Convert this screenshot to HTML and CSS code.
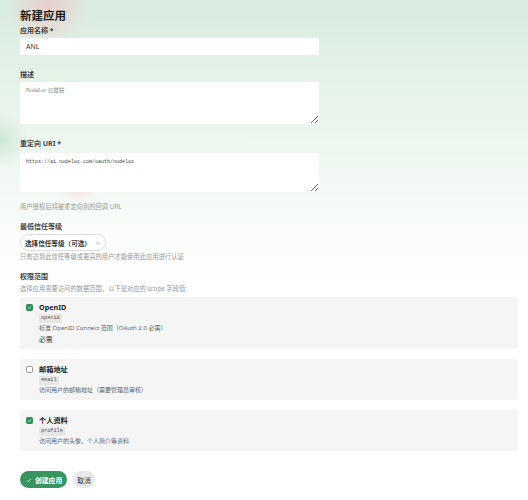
FILE: index.html
```html
<!DOCTYPE html>
<html lang="zh-CN">
<head>
    <meta charset="UTF-8">
    <meta name="viewport" content="width=device-width, initial-scale=1.0">
    <title>新建应用</title>
    <link rel="stylesheet" href="styles.css">
</head>
<body>
    <div class="page">
        <h1 class="page-title">新建应用</h1>

        <div class="field">
            <label class="label" for="appName">应用名称 *</label>
            <input class="input" id="appName" type="text" value="ANL">
        </div>

        <div class="field">
            <label class="label" for="appDesc">描述</label>
            <textarea class="textarea textarea-desc" id="appDesc">NodeLoc 公益站</textarea>
        </div>

        <div class="field field-hint">
            <label class="label label-uri" for="redirectUri">重定向 URI *</label>
            <textarea class="textarea textarea-uri" id="redirectUri">https://ai.nodeloc.com/oauth/nodeloc</textarea>
            <p class="hint hint-uri">用户授权后将被重定向到的回调 URL</p>
        </div>

        <div class="field field-hint">
            <label class="label">最低信任等级</label>
            <button class="select" type="button">
                选择信任等级（可选）
                <svg width="6" height="6" viewBox="0 0 10 10"><path d="M2 4l3 3 3-3" fill="none" stroke="#999" stroke-width="1.2"/></svg>
            </button>
            <p class="hint">只有达到此信任等级或更高的用户才能使用此应用进行认证</p>
        </div>

        <div class="field">
            <div class="label">权限范围</div>
            <p class="hint hint-scope">选择应用需要访问的数据范围，以下是对应的 scope 字段值:</p>

            <div class="scope-list">
                <div class="scope-card">
                    <span class="check checked"><svg viewBox="0 0 10 10"><path d="M2.2 5.2l1.9 1.9 3.8-4" fill="none" stroke="#fff" stroke-width="1.6"/></svg></span>
                    <div class="scope-body">
                        <div class="scope-name">OpenID</div>
                        <code class="scope-code">openid</code>
                        <div class="scope-desc">标准 OpenID Connect 范围（OAuth 2.0 必需）</div>
                        <div class="scope-required">必需</div>
                    </div>
                </div>

                <div class="scope-card">
                    <span class="check"></span>
                    <div class="scope-body">
                        <div class="scope-name">邮箱地址</div>
                        <code class="scope-code">email</code>
                        <div class="scope-desc">访问用户的邮箱地址（需要管理员审核）</div>
                    </div>
                </div>

                <div class="scope-card">
                    <span class="check checked"><svg viewBox="0 0 10 10"><path d="M2.2 5.2l1.9 1.9 3.8-4" fill="none" stroke="#fff" stroke-width="1.6"/></svg></span>
                    <div class="scope-body">
                        <div class="scope-name">个人资料</div>
                        <code class="scope-code">profile</code>
                        <div class="scope-desc">访问用户的头像、个人简介等资料</div>
                    </div>
                </div>
            </div>
        </div>

        <div class="actions">
            <button class="btn btn-primary" type="button">
                <svg width="6" height="6" viewBox="0 0 10 10"><path d="M1.5 5.5l2.5 2.5 4.5-5" fill="none" stroke="#fff" stroke-width="1.2"/></svg>
                创建应用
            </button>
            <button class="btn btn-cancel" type="button">取消</button>
        </div>
    </div>
</body>
</html>
```

FILE: styles.css
```css
body {
    margin: 0;
    min-height: 500px;
    font-family: "Noto Sans", "Noto Sans CJK SC", sans-serif;
    color: #222;
    background:
        radial-gradient(circle at 48px 6px, rgba(238, 196, 196, 0.75), rgba(238, 196, 196, 0) 42px),
        radial-gradient(circle at 78px 178px, rgba(236, 190, 190, 0.6), rgba(236, 190, 190, 0) 26px),
        radial-gradient(circle at 0 140px, rgba(190, 225, 200, 0.7), rgba(190, 225, 200, 0) 28px),
        linear-gradient(180deg, #d8ece0 0, #e6f3ea 90px, #eef6f0 150px, #f9fcfa 230px, #fff 290px);
}

.page {
    padding: 7px 10px 0 20px;
}

.page-title {
    margin: 0;
    font-size: 11.5px;
    line-height: 18px;
    font-weight: 700;
    color: #1c1c1c;
}

.field {
    margin-bottom: 14px;
}

.field-hint {
    margin-bottom: 9px;
}

.label {
    display: block;
    margin-bottom: 2px;
    font-size: 7px;
    line-height: 11px;
    font-weight: 700;
    color: #444;
}

.label-uri {
    margin-bottom: 4px;
}

.input,
.textarea {
    display: block;
    box-sizing: border-box;
    width: 299px;
    margin: 0;
    border: none;
    border-radius: 1px;
    background: #fff;
    outline: none;
}

.input {
    height: 17px;
    padding: 0 6px;
    font-family: "Noto Sans", sans-serif;
    font-size: 7px;
    color: #333;
}

.textarea {
    padding: 4px 6px;
}

.textarea-desc {
    height: 42px;
    font-family: "Liberation Serif", "Noto Sans CJK SC", serif;
    font-size: 5.5px;
    color: #777;
}

.textarea-uri {
    height: 39px;
    padding-top: 6px;
    font-family: "Liberation Mono", monospace;
    font-size: 5px;
    color: #444;
}

.hint {
    margin: 1px 0 0;
    font-size: 6.3px;
    line-height: 10px;
    color: #999;
}

.hint-uri {
    margin-top: 10px;
}

.hint-scope {
    margin-top: 2px;
    margin-bottom: 3px;
}

.select {
    display: flex;
    align-items: center;
    gap: 4px;
    height: 17px;
    margin: 0;
    padding: 0 4px 0 4px;
    border: 1px solid #ddd;
    border-radius: 9px;
    background: #fff;
    font-family: "Noto Sans", "Noto Sans CJK SC", sans-serif;
    font-size: 6.6px;
    font-weight: 700;
    color: #333;
}

.scope-list {
    display: flex;
    flex-direction: column;
    gap: 10px;
}

.scope-card {
    display: flex;
    gap: 6px;
    padding: 5px 6px 4px;
    background: #f5f5f5;
    border-radius: 2px;
}

.check {
    flex: none;
    box-sizing: border-box;
    width: 7px;
    height: 7px;
    margin-top: 2px;
    border: 1px solid #999;
    border-radius: 1.5px;
    background: #fff;
}

.check.checked {
    border-color: #2f8f5a;
    background: #2f8f5a;
}

.check svg {
    display: block;
    width: 5px;
    height: 5px;
}

.scope-name {
    font-size: 7.2px;
    line-height: 11px;
    font-weight: 700;
    color: #222;
}

.scope-code {
    display: block;
    width: fit-content;
    margin-top: 1px;
    padding: 0 2px;
    height: 9px;
    line-height: 9px;
    border-radius: 1px;
    background: #e6e6e6;
    font-family: "Liberation Mono", monospace;
    font-size: 5.2px;
    color: #555;
}

.scope-desc {
    font-size: 6px;
    line-height: 11px;
    color: #666;
}

.scope-required {
    font-size: 6.8px;
    line-height: 11px;
    color: #333;
}

.actions {
    display: flex;
    gap: 6px;
    margin-top: 20px;
}

.btn {
    display: flex;
    align-items: center;
    gap: 3px;
    height: 17px;
    margin: 0;
    border: none;
    border-radius: 9px;
    font-family: "Noto Sans", "Noto Sans CJK SC", sans-serif;
    font-size: 6.8px;
    cursor: pointer;
}

.btn-primary {
    padding: 0 5px 0 6px;
    background: #3a9462;
    color: #fff;
    font-weight: 700;
}

.btn-cancel {
    padding: 0 4px;
    background: #e8e8e8;
    color: #333;
}
```
